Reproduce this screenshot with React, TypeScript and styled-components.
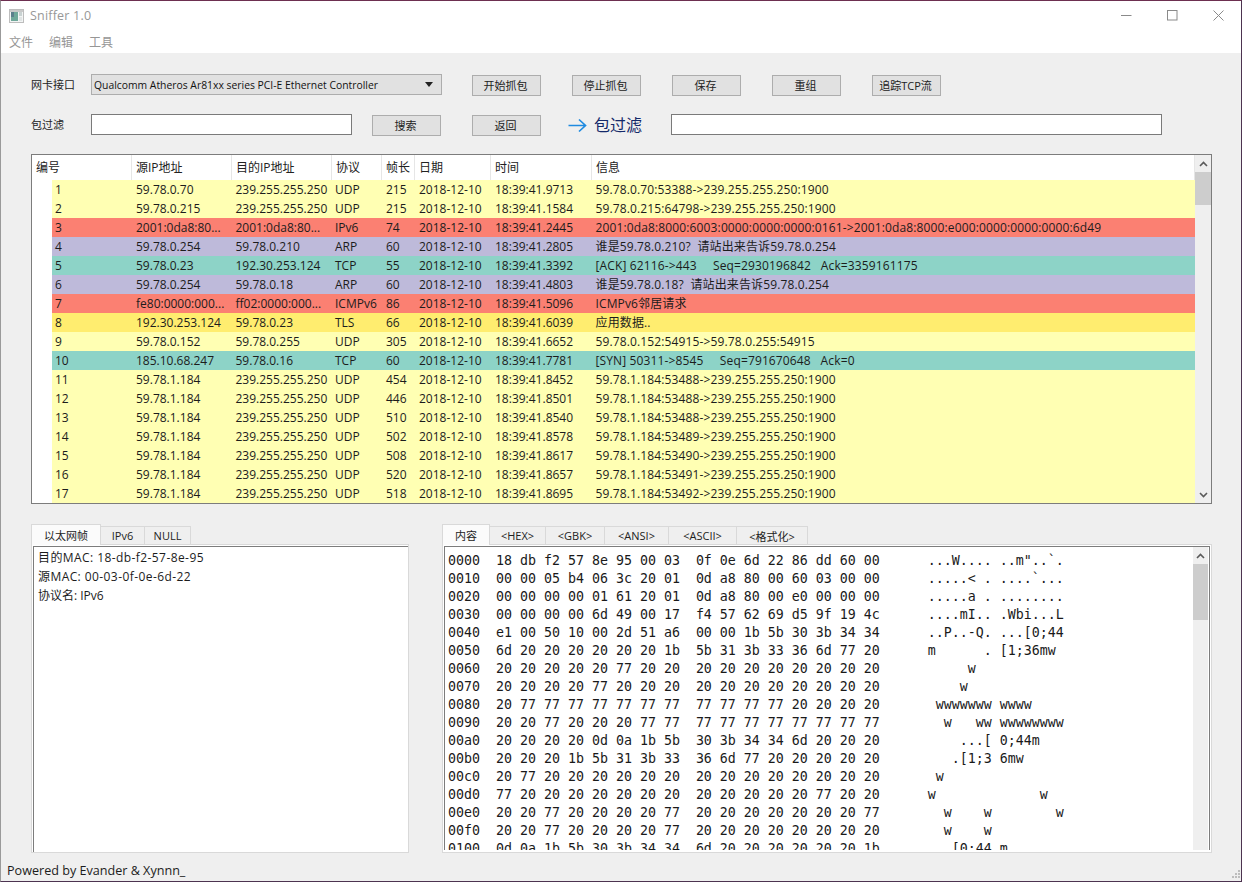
import React from "react";
import styled, { createGlobalStyle } from "styled-components";

const UI_FONT = `"Open Sans", "Noto Sans CJK SC", sans-serif`;

const Global = createGlobalStyle`
  html, body { margin: 0; padding: 0; background: #efefef; overflow: hidden; }
  * { box-sizing: border-box; }
`;

const Window = styled.div`
  width: 1242px; height: 882px; display: flex; flex-direction: column;
  background: #efefef; font-family: ${UI_FONT}; font-size: 12px; color: #1a1a1a;
  border-top: 1px solid #6d2f50; border-left: 1px solid #9a9a9a;
  border-right: 1px solid #4c3350; border-bottom: 1px solid #4c3350;
  overflow: hidden;
`;
const TitleBar = styled.div`
  height: 29px; background: #fff; display: flex; align-items: center; padding-left: 8px; flex: none;
`;
const TitleText = styled.span`
  margin-left: 6px; font-size: 12.5px; color: #979797; letter-spacing: 0.2px; flex: 1;
`;
const WinButton = styled.div`
  width: 46px; height: 29px; display: flex; align-items: center; justify-content: center;
`;
const MenuBar = styled.div`
  height: 23px; background: #fff; display: flex; gap: 16px; padding: 1px 0 0 8px; flex: none;
`;
const MenuItem = styled.span`
  font-size: 12px; line-height: 23px; color: #969696;
`;
const Body = styled.div`
  flex: 1; display: flex; flex-direction: column; padding: 21px 29px 0 30px; min-height: 0;
`;
const FormRow = styled.div`
  display: flex; align-items: flex-start; height: 22px; margin-bottom: 18px; flex: none;
`;
const Label = styled.span`
  width: 60px; font-size: 11px; line-height: 21px; flex: none; color: #222;
`;
const Combo = styled.div`
  width: 351px; height: 21px; background: #e1e1e1; border: 1px solid #adadad; display: flex;
  align-items: center; padding: 0 8px 0 2px; justify-content: space-between; font-size: 10.37px; flex: none; color: #111;
`;
const ComboArrow = styled.span`
  width: 0; height: 0; border-left: 4px solid transparent; border-right: 4px solid transparent;
  border-top: 5px solid #222;
`;
const TextInput = styled.div<{ $w: number }>`
  width: ${(p) => p.$w}px; height: 21px; background: #fff; border: 1px solid #7a7a7a; flex: none;
`;
const PushButton = styled.div<{ $gap: number }>`
  width: 69px; height: 21px; margin-top: 1px; margin-left: ${(p) => p.$gap}px; background: #e1e1e1;
  border: 1px solid #adadad; display: flex; align-items: center; justify-content: center;
  font-size: 11px; flex: none; color: #222; padding: 0 2px 2px 0;
`;
const ArrowMark = styled.svg`
  margin: 1px 7px 0 27px; flex: none;
`;
const BigLabel = styled.span`
  width: 48px; margin-right: 29px; font-size: 16px; line-height: 22px; color: #14296a; flex: none;
`;
const Table = styled.div`
  height: 350px; width: 1181px; border: 1px solid #7c7c7c; background: #fff; display: flex; flex: none;
`;
const TableMain = styled.div`
  flex: 1; min-width: 0;
`;
const HeaderRow = styled.div`
  height: 25px; display: grid; grid-template-columns: 100px 100px 100px 50px 33px 76px 101px 1fr;
`;
const HeaderCell = styled.div`
  padding-left: 4px; line-height: 25px; font-size: 12px; border-right: 1px solid #e6e6e6; white-space: nowrap; color: #222;
`;
const DataRow = styled.div<{ $bg: string }>`
  height: 19px; margin-left: 20px; background: ${(p) => p.$bg};
  display: grid; grid-template-columns: 80px 99.5px 99.5px 51px 33px 76px 100.5px 1fr;
`;
const DataCell = styled.div<{ $first?: boolean }>`
  padding-left: ${(p) => (p.$first ? 3 : 4)}px; line-height: 19px; font-size: 12px; white-space: pre; overflow: hidden; color: #1c1c1c;
`;
const InfoCell = styled(DataCell)`
  letter-spacing: 0.135px;
`;
const ScrollBar = styled.div`
  width: 16px; background: #efefef; display: flex; flex-direction: column; flex: none;
`;
const ScrollArrow = styled.div`
  height: 17px; display: flex; align-items: center; justify-content: center; flex: none;
`;
const ScrollThumb = styled.div<{ $h: number }>`
  height: ${(p) => p.$h}px; background: #cdcdcd; flex: none;
`;
const ScrollTrack = styled.div`
  flex: 1;
`;
const Lower = styled.div`
  display: grid; grid-template-columns: 378px 770px; column-gap: 33px; margin-top: 20px; flex: none;
`;
const TabColumn = styled.div`
  display: flex; flex-direction: column;
`;
const TabRow = styled.div`
  display: flex; height: 21px; align-items: flex-end; position: relative; z-index: 1; margin-bottom: -1px;
`;
const Tab = styled.div<{ $w: number; $active?: boolean }>`
  width: ${(p) => p.$w}px; height: ${(p) => (p.$active ? 21 : 19)}px; background: ${(p) => (p.$active ? "#fbfbfb" : "#efefef")};
  border: 1px solid #d9d9d9; border-left-width: ${(p) => (p.$active ? 1 : 0)}px;
  border-bottom: ${(p) => (p.$active ? "none" : "1px solid #d9d9d9")};
  font-size: 11px; display: flex; align-items: center; justify-content: center; white-space: nowrap; color: #222;
`;
const Pane = styled.div`
  height: 309px; border: 1px solid #d9d9d9; background: #fff; padding: 1px 0 0 1px;
`;
const InfoBox = styled.div`
  height: 100%; border-top: 1px solid #7c7c7c; border-left: 1px solid #7c7c7c; padding: 1px 4px;
`;
const InfoLine = styled.div<{ $spread?: boolean }>`
  height: 19px; line-height: 19px; font-size: 12px; white-space: pre; color: #1c1c1c;
  letter-spacing: ${(p) => (p.$spread ? "0.42px" : "0")};
`;
const HexBox = styled.div`
  height: 304px; border: 1px solid #7c7c7c; border-bottom: none; display: flex; margin-right: 1px; overflow: hidden;
`;
const HexText = styled.div`
  flex: 1; padding: 5px 0 0 3px; overflow: hidden; min-width: 0;
`;
const HexLine = styled.div`
  height: 18px; line-height: 18px; font-family: "DejaVu Sans Mono", monospace; font-size: 13.29px; white-space: pre; color: #1a1a1a;
`;
const HexScroll = styled(ScrollBar)`
  width: 15px; margin-right: 1px;
`;
const FooterBar = styled.div`
  flex: none; height: 28px; margin-top: -28px; display: flex; align-items: center; padding: 7px 0 0 6px;
  font-size: 12.6px; position: relative; color: #1c1c1c;
`;
const Grip = styled.svg`
  position: absolute; right: 0; bottom: 0;
`;

const Y = "#ffffb3", R = "#fb8072", P = "#bebada", G = "#8dd3c7", T = "#ffed6f";
const D = "2018-12-10";
const rows: [string, string, string, string, string, string, string][] = [
  [Y, "59.78.0.70", "239.255.255.250", "UDP", "215", "18:39:41.9713", "59.78.0.70:53388->239.255.255.250:1900"],
  [Y, "59.78.0.215", "239.255.255.250", "UDP", "215", "18:39:41.1584", "59.78.0.215:64798->239.255.255.250:1900"],
  [R, "2001:0da8:80...", "2001:0da8:80...", "IPv6", "74", "18:39:41.2445", "2001:0da8:8000:6003:0000:0000:0000:0161->2001:0da8:8000:e000:0000:0000:0000:6d49"],
  [P, "59.78.0.254", "59.78.0.210", "ARP", "60", "18:39:41.2805", "谁是59.78.0.210?  请站出来告诉59.78.0.254"],
  [G, "59.78.0.23", "192.30.253.124", "TCP", "55", "18:39:41.3392", "[ACK] 62116->443     Seq=2930196842   Ack=3359161175"],
  [P, "59.78.0.254", "59.78.0.18", "ARP", "60", "18:39:41.4803", "谁是59.78.0.18?  请站出来告诉59.78.0.254"],
  [R, "fe80:0000:000...", "ff02:0000:000...", "ICMPv6", "86", "18:39:41.5096", "ICMPv6邻居请求"],
  [T, "192.30.253.124", "59.78.0.23", "TLS", "66", "18:39:41.6039", "应用数据.."],
  [Y, "59.78.0.152", "59.78.0.255", "UDP", "305", "18:39:41.6652", "59.78.0.152:54915->59.78.0.255:54915"],
  [G, "185.10.68.247", "59.78.0.16", "TCP", "60", "18:39:41.7781", "[SYN] 50311->8545     Seq=791670648   Ack=0"],
  [Y, "59.78.1.184", "239.255.255.250", "UDP", "454", "18:39:41.8452", "59.78.1.184:53488->239.255.255.250:1900"],
  [Y, "59.78.1.184", "239.255.255.250", "UDP", "446", "18:39:41.8501", "59.78.1.184:53488->239.255.255.250:1900"],
  [Y, "59.78.1.184", "239.255.255.250", "UDP", "510", "18:39:41.8540", "59.78.1.184:53488->239.255.255.250:1900"],
  [Y, "59.78.1.184", "239.255.255.250", "UDP", "502", "18:39:41.8578", "59.78.1.184:53489->239.255.255.250:1900"],
  [Y, "59.78.1.184", "239.255.255.250", "UDP", "508", "18:39:41.8617", "59.78.1.184:53490->239.255.255.250:1900"],
  [Y, "59.78.1.184", "239.255.255.250", "UDP", "520", "18:39:41.8657", "59.78.1.184:53491->239.255.255.250:1900"],
  [Y, "59.78.1.184", "239.255.255.250", "UDP", "518", "18:39:41.8695", "59.78.1.184:53492->239.255.255.250:1900"],
];

const hex = [
  "18 db f2 57 8e 95 00 03 0f 0e 6d 22 86 dd 60 00",
  "00 00 05 b4 06 3c 20 01 0d a8 80 00 60 03 00 00",
  "00 00 00 00 01 61 20 01 0d a8 80 00 e0 00 00 00",
  "00 00 00 00 6d 49 00 17 f4 57 62 69 d5 9f 19 4c",
  "e1 00 50 10 00 2d 51 a6 00 00 1b 5b 30 3b 34 34",
  "6d 20 20 20 20 20 20 1b 5b 31 3b 33 36 6d 77 20",
  "20 20 20 20 20 77 20 20 20 20 20 20 20 20 20 20",
  "20 20 20 20 77 20 20 20 20 20 20 20 20 20 20 20",
  "20 77 77 77 77 77 77 77 77 77 77 77 20 20 20 20",
  "20 20 77 20 20 20 77 77 77 77 77 77 77 77 77 77",
  "20 20 20 20 0d 0a 1b 5b 30 3b 34 34 6d 20 20 20",
  "20 20 20 1b 5b 31 3b 33 36 6d 77 20 20 20 20 20",
  "20 77 20 20 20 20 20 20 20 20 20 20 20 20 20 20",
  "77 20 20 20 20 20 20 20 20 20 20 20 20 77 20 20",
  "20 20 77 20 20 20 20 77 20 20 20 20 20 20 20 77",
  "20 20 77 20 20 20 20 77 20 20 20 20 20 20 20 20",
  "0d 0a 1b 5b 30 3b 34 34 6d 20 20 20 20 20 20 1b",
];

const hexLine = (s: string, i: number) => {
  const b = s.split(" ");
  const asc = b.map((x) => {
    const c = parseInt(x, 16);
    return c >= 32 && c < 127 ? String.fromCharCode(c) : ".";
  });
  const off = (i * 16).toString(16).padStart(4, "0");
  return `${off}  ${b.slice(0, 8).join(" ")}  ${b.slice(8).join(" ")}      ${asc.slice(0, 8).join("")} ${asc.slice(8).join("")}`;
};

const Up = () => (
  <svg width="9" height="6" viewBox="0 0 9 6"><path d="M1 5 L4.5 1.5 L8 5" fill="none" stroke="#5a5a5a" strokeWidth="1.6" /></svg>
);
const Down = () => (
  <svg width="9" height="6" viewBox="0 0 9 6"><path d="M1 1 L4.5 4.5 L8 1" fill="none" stroke="#5a5a5a" strokeWidth="1.6" /></svg>
);

const AppIcon = () => (
  <svg width="15" height="14" viewBox="0 0 15 14">
    <rect x="0.5" y="0.5" width="14" height="13" fill="#f2f4f4" stroke="#bdbdbd" />
    <rect x="1" y="1" width="13" height="2" fill="#c9c9c9" />
    <rect x="2" y="3" width="7" height="9" fill="#6fa89a" />
    <rect x="2" y="3" width="3" height="5" fill="#5b7f8c" />
    <rect x="10" y="3" width="3" height="4" fill="#c9d2d2" />
    <rect x="10" y="8" width="3" height="4" fill="#e0e4e4" />
  </svg>
);

function Footer() {
  return (
    <FooterBar>
      Powered by Evander &amp; Xynnn_
      <Grip width="12" height="12" viewBox="0 0 12 12">
        <g fill="#bdbdbd">
          <rect x="9" y="1" width="2" height="2" />
          <rect x="6" y="4" width="2" height="2" />
          <rect x="9" y="4" width="2" height="2" />
          <rect x="3" y="7" width="2" height="2" />
          <rect x="6" y="7" width="2" height="2" />
          <rect x="9" y="7" width="2" height="2" />
        </g>
      </Grip>
    </FooterBar>
  );
}

export default function App() {
  return (
    <Window>
      <Global />
      <TitleBar>
        <AppIcon />
        <TitleText>Sniffer 1.0</TitleText>
        <WinButton>
          <svg width="11" height="11" viewBox="0 0 11 11"><path d="M0 5.5H10.5" stroke="#8a8a8a" /></svg>
        </WinButton>
        <WinButton>
          <svg width="11" height="11" viewBox="0 0 11 11"><rect x="0.5" y="0.5" width="9.5" height="9.5" fill="none" stroke="#8a8a8a" /></svg>
        </WinButton>
        <WinButton>
          <svg width="11" height="11" viewBox="0 0 11 11"><path d="M0.5 0.5L10.5 10.5M10.5 0.5L0.5 10.5" stroke="#8a8a8a" /></svg>
        </WinButton>
      </TitleBar>
      <MenuBar>
        <MenuItem>文件</MenuItem>
        <MenuItem>编辑</MenuItem>
        <MenuItem>工具</MenuItem>
      </MenuBar>
      <Body>
        <FormRow>
          <Label>网卡接口</Label>
          <Combo>
            <span>Qualcomm Atheros Ar81xx series PCI-E Ethernet Controller</span>
            <ComboArrow />
          </Combo>
          <PushButton $gap={30}>开始抓包</PushButton>
          <PushButton $gap={31}>停止抓包</PushButton>
          <PushButton $gap={31}>保存</PushButton>
          <PushButton $gap={31}>重组</PushButton>
          <PushButton $gap={31}>追踪TCP流</PushButton>
        </FormRow>
        <FormRow>
          <Label>包过滤</Label>
          <TextInput $w={261} />
          <PushButton $gap={20}>搜索</PushButton>
          <PushButton $gap={31}>返回</PushButton>
          <ArrowMark width="19" height="20" viewBox="0 0 19 20">
            <path d="M0.5 10.5H17M11 4.5L17.5 10.5L11 16.5" fill="none" stroke="#1f8ae0" strokeWidth="1.7" />
          </ArrowMark>
          <BigLabel>包过滤</BigLabel>
          <TextInput $w={491} />
        </FormRow>
        <Table>
          <TableMain>
            <HeaderRow>
              <HeaderCell>编号</HeaderCell>
              <HeaderCell>源IP地址</HeaderCell>
              <HeaderCell>目的IP地址</HeaderCell>
              <HeaderCell>协议</HeaderCell>
              <HeaderCell>帧长</HeaderCell>
              <HeaderCell>日期</HeaderCell>
              <HeaderCell>时间</HeaderCell>
              <HeaderCell>信息</HeaderCell>
            </HeaderRow>
            {rows.map((r, i) => (
              <DataRow key={i} $bg={r[0]}>
                <DataCell $first>{i + 1}</DataCell>
                <DataCell>{r[1]}</DataCell>
                <DataCell>{r[2]}</DataCell>
                <DataCell>{r[3]}</DataCell>
                <DataCell>{r[4]}</DataCell>
                <DataCell>{D}</DataCell>
                <DataCell>{r[5]}</DataCell>
                <InfoCell>{r[6]}</InfoCell>
              </DataRow>
            ))}
          </TableMain>
          <ScrollBar>
            <ScrollArrow><Up /></ScrollArrow>
            <ScrollThumb $h={33} />
            <ScrollTrack />
            <ScrollArrow><Down /></ScrollArrow>
          </ScrollBar>
        </Table>
        <Lower>
          <TabColumn>
            <TabRow>
              <Tab $w={70} $active>以太网帧</Tab>
              <Tab $w={44}>IPv6</Tab>
              <Tab $w={46}>NULL</Tab>
            </TabRow>
            <Pane>
              <InfoBox>
                <InfoLine $spread>目的MAC: 18-db-f2-57-8e-95</InfoLine>
                <InfoLine $spread>源MAC: 00-03-0f-0e-6d-22</InfoLine>
                <InfoLine>协议名: IPv6</InfoLine>
              </InfoBox>
            </Pane>
          </TabColumn>
          <TabColumn>
            <TabRow>
              <Tab $w={48} $active>内容</Tab>
              <Tab $w={56}>&lt;HEX&gt;</Tab>
              <Tab $w={59}>&lt;GBK&gt;</Tab>
              <Tab $w={64}>&lt;ANSI&gt;</Tab>
              <Tab $w={68}>&lt;ASCII&gt;</Tab>
              <Tab $w={71}>&lt;格式化&gt;</Tab>
            </TabRow>
            <Pane>
              <HexBox>
                <HexText>
                  {hex.map((h, i) => (
                    <HexLine key={i}>{hexLine(h, i)}</HexLine>
                  ))}
                </HexText>
                <HexScroll>
                  <ScrollArrow><Up /></ScrollArrow>
                  <ScrollThumb $h={56} />
                  <ScrollTrack />
                </HexScroll>
              </HexBox>
            </Pane>
          </TabColumn>
        </Lower>
      </Body>
      <Footer />
    </Window>
  );
}
